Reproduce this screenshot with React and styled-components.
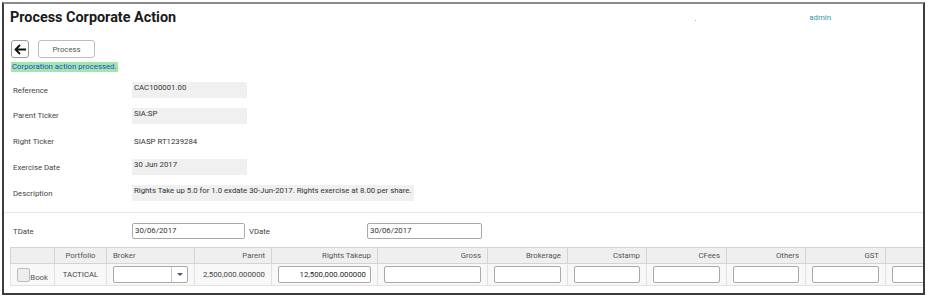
import React from 'react'
import styled, { createGlobalStyle } from 'styled-components'

const GlobalStyle = createGlobalStyle`
  html, body {
    margin: 0;
    padding: 0;
    background: #ffffff;
  }
  body {
    font-family: Roboto, 'Liberation Sans', Arial, sans-serif;
    font-size: 7.8px;
    color: #333;
  }
`

const Frame = styled.div`
  box-sizing: border-box;
  margin: 2px 0 0 2px;
  width: 923px;
  height: 293px;
  border: 2px solid #3c3c3c;
  border-top-color: #8a8a8a;
  overflow: hidden;
  background: #fff;
`

const Header = styled.div`
  display: flex;
  align-items: center;
  height: 25px;
  padding: 1px 0 0 6px;
`

const Title = styled.h1`
  flex: 1;
  margin: 0;
  font-family: Roboto, 'Liberation Sans', Arial, sans-serif;
  font-weight: 700;
  font-size: 14.4px;
  color: #1a1a1a;
`

const Dot = styled.span`
  width: 1px;
  height: 1px;
  margin-top: 6px;
  background: #e3a0a0;
`

const UserName = styled.span`
  margin: 0 92px 0 113px;
  color: #2e9aa0;
  font-size: 7.8px;
`

const Toolbar = styled.div`
  display: flex;
  align-items: center;
  gap: 9px;
  margin: 10px 0 0 7px;
`

const IconButton = styled.button`
  box-sizing: border-box;
  width: 18px;
  height: 18px;
  padding: 0;
  display: flex;
  align-items: center;
  justify-content: center;
  background: #fff;
  border: 1px solid #9a9a9a;
  border-radius: 3px;
`

const TextButton = styled.button`
  box-sizing: border-box;
  width: 57px;
  height: 18px;
  padding: 0;
  background: #fff;
  border: 1px solid #bdbdbd;
  border-radius: 3px;
  font-family: Roboto, 'Liberation Sans', Arial, sans-serif;
  font-size: 7.8px;
  color: #555;
`

const Message = styled.div`
  display: inline-block;
  margin: 4px 0 0 7px;
  padding: 0 1px;
  line-height: 10px;
  background: #a3e6ad;
  color: #2448d4;
`

const Fields = styled.div`
  display: grid;
  grid-template-columns: 119px auto;
  grid-auto-rows: 16px;
  row-gap: 9.8px;
  justify-items: start;
  margin: 10px 0 0 9px;
`

const Label = styled.div`
  align-self: center;
  color: #444;
`

const Value = styled.div`
  box-sizing: border-box;
  min-width: ${p => (p.$wide ? '282px' : '115px')};
  height: 16px;
  padding: 1px 2px 0;
  line-height: 10px;
  background: ${p => (p.$plain ? 'transparent' : '#f0f0f0')};
  color: #333;
  ${p => p.$plain && 'line-height: 16px; padding-top: 0;'}
`

const Divider = styled.hr`
  margin: 11px 0 0;
  border: 0;
  border-top: 1px solid #e6e6e6;
`

const DateRow = styled.div`
  display: flex;
  align-items: center;
  margin: 10px 0 0 9px;
  height: 16px;
`

const DateLabel = styled.span`
  width: ${p => p.$w}px;
  padding-left: ${p => p.$pad || 0}px;
  color: #444;
`

const DateInput = styled.div`
  box-sizing: border-box;
  width: ${p => p.$w}px;
  height: 16px;
  padding: 0 2px;
  line-height: 14px;
  border: 1px solid #a9a9a9;
  border-radius: 2px;
  color: #333;
`

const Table = styled.table`
  margin: 8px 0 0 6px;
  border-collapse: collapse;
  table-layout: fixed;
  width: 1000px;
  font-size: 7.8px;
`

const Th = styled.th`
  height: 15px;
  padding: 0 6px;
  background: #efefef;
  border: 1px solid #d4d4d4;
  font-weight: 400;
  color: #555;
  text-align: ${p => p.$align || 'right'};
`

const Td = styled.td`
  height: 21px;
  padding: 0 6px;
  background: #f8f8f8;
  border: 1px solid #e2e2e2;
  color: #444;
  text-align: ${p => p.$align || 'right'};
`

const CellInput = styled.div`
  box-sizing: border-box;
  height: 17px;
  padding: 0 4px;
  line-height: 15px;
  background: #fff;
  border: 1px solid #a9a9a9;
  border-radius: 2px;
  text-align: right;
  color: #222;
`

const CheckWrap = styled.label`
  display: flex;
  align-items: flex-end;
  color: #555;
`

const Check = styled.span`
  box-sizing: border-box;
  width: 14px;
  height: 14px;
  background: #ededed;
  border: 1px solid #bdbdbd;
  border-radius: 2px;
`

const Select = styled.div`
  box-sizing: border-box;
  display: flex;
  justify-content: flex-end;
  height: 17px;
  background: #fff;
  border: 1px solid #a9a9a9;
  border-radius: 2px;
`

const SelectArrow = styled.span`
  box-sizing: border-box;
  width: 16px;
  display: flex;
  align-items: center;
  justify-content: center;
  border-left: 1px solid #c8c8c8;
  &:after {
    content: '';
    border: 3px solid transparent;
    border-top: 3px solid #44596e;
    border-bottom-width: 0;
  }
`

const columns = [
  { key: 'book', label: '', width: 44, align: 'left' },
  { key: 'portfolio', label: 'Portfolio', width: 52, align: 'center' },
  { key: 'broker', label: 'Broker', width: 88, align: 'left' },
  { key: 'parent', label: 'Parent', width: 77 },
  { key: 'takeup', label: 'Rights Takeup', width: 106 },
  { key: 'gross', label: 'Gross', width: 110 },
  { key: 'brokerage', label: 'Brokerage', width: 80 },
  { key: 'cstamp', label: 'Cstamp', width: 79 },
  { key: 'cfees', label: 'CFees', width: 80 },
  { key: 'others', label: 'Others', width: 79 },
  { key: 'gst', label: 'GST', width: 80 },
  { key: 'extra', label: '', width: 125 },
]

function renderCell(key) {
  switch (key) {
    case 'book':
      return (
        <CheckWrap>
          <Check />
          Book
        </CheckWrap>
      )
    case 'portfolio':
      return 'TACTICAL'
    case 'broker':
      return (
        <Select>
          <SelectArrow />
        </Select>
      )
    case 'parent':
      return '2,500,000.000000'
    case 'takeup':
      return <CellInput>12,500,000.000000</CellInput>
    default:
      return <CellInput />
  }
}

const fields = [
  { label: 'Reference', value: 'CAC100001.00' },
  { label: 'Parent Ticker', value: 'SIA:SP' },
  { label: 'Right Ticker', value: 'SIASP RT1239284', plain: true },
  { label: 'Exercise Date', value: '30 Jun 2017' },
  {
    label: 'Description',
    value: 'Rights Take up 5.0 for 1.0 exdate 30-Jun-2017. Rights exercise at 8.00 per share.',
    wide: true,
  },
]

export default function App() {
  return (
    <>
      <GlobalStyle />
      <Frame>
        <Header>
          <Title>Process Corporate Action</Title>
          <Dot />
          <UserName>admin</UserName>
        </Header>

        <Toolbar>
          <IconButton aria-label="Back">
            <svg width="13" height="11" viewBox="0 0 13 11">
              <path d="M12 5.5H2M6 1L1.5 5.5 6 10" fill="none" stroke="#111" strokeWidth="1.8" />
            </svg>
          </IconButton>
          <TextButton>Process</TextButton>
        </Toolbar>
        <Message>Corporation action processed.</Message>

        <Fields>
          {fields.map(f => (
            <React.Fragment key={f.label}>
              <Label>{f.label}</Label>
              <Value $plain={f.plain} $wide={f.wide}>{f.value}</Value>
            </React.Fragment>
          ))}
        </Fields>

        <Divider />

        <DateRow>
          <DateLabel $w={119}>TDate</DateLabel>
          <DateInput $w={113}>30/06/2017</DateInput>
          <DateLabel $w={118} $pad={4}>VDate</DateLabel>
          <DateInput $w={115}>30/06/2017</DateInput>
        </DateRow>

        <Table>
          <colgroup>
            {columns.map(c => (
              <col key={c.key} style={{ width: c.width }} />
            ))}
          </colgroup>
          <thead>
            <tr>
              {columns.map(c => (
                <Th key={c.key} $align={c.align}>{c.label}</Th>
              ))}
            </tr>
          </thead>
          <tbody>
            <tr>
              {columns.map(c => (
                <Td key={c.key} $align={c.align}>{renderCell(c.key)}</Td>
              ))}
            </tr>
          </tbody>
        </Table>
      </Frame>
    </>
  )
}
